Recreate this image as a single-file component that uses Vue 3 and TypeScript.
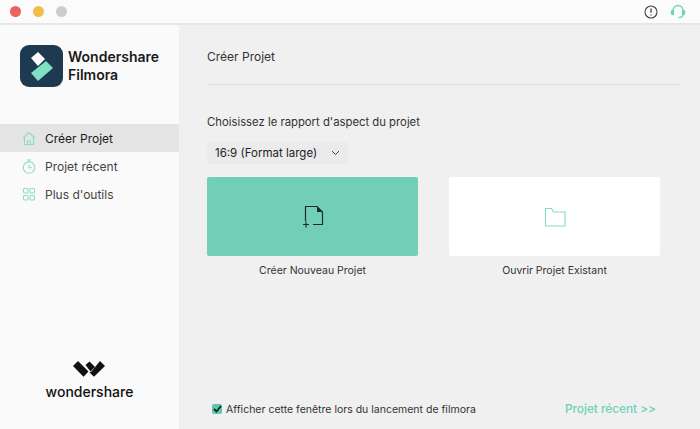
<script setup lang="ts">
interface NavItem { label: string; icon: string; active?: boolean }
const nav: NavItem[] = [
  { label: 'Créer Projet', icon: 'home', active: true },
  { label: 'Projet récent', icon: 'clock' },
  { label: "Plus d'outils", icon: 'grid' },
]
</script>

<template>
  <div class="window">
    <header class="titlebar">
      <div class="lights">
        <span class="light red"></span>
        <span class="light yellow"></span>
        <span class="light grey"></span>
      </div>
      <div class="tools">
        <svg width="14" height="14" viewBox="0 0 14 14" fill="none" stroke="#444" stroke-width="1.100">
          <circle cx="7" cy="7" r="6"/>
          <path d="M7 3.400v4.400M7 9.400v1.200" stroke-width="1.300"/>
        </svg>
        <svg width="16" height="15" viewBox="0 0 16 15" fill="none" stroke="#6fd3b9" stroke-width="1.300">
          <path d="M3 8V6.500a5 5 0 0 1 10 0V8"/>
          <rect x="1.500" y="6.500" width="2" height="4" rx="1" fill="#6fd3b9"/>
          <rect x="12.500" y="6.500" width="2" height="4" rx="1" fill="#6fd3b9"/>
          <path d="M13 10.500c0 2-2 3-4.500 3"/>
        </svg>
      </div>
    </header>
    <div class="body">
      <aside class="sidebar">
        <div class="brand">
          <div class="logo">
            <svg width="43" height="42" viewBox="0 0 43 42">
              <path d="M11 13 L18 7 L25 14 L18 21Z" fill="#fff"/>
              <path d="M11 28 L26 16 L33 23 L18 36Z" fill="#7fe0c4"/>
            </svg>
          </div>
          <div class="brand-name">Wondershare<br />Filmora</div>
        </div>
        <nav class="nav">
          <div v-for="item in nav" :key="item.label" class="nav-item" :class="{ active: item.active }">
            <svg width="14" height="15" viewBox="0 0 14 15" fill="none" stroke="#8fdcc6" stroke-width="1.100">
              <template v-if="item.icon === 'home'">
                <path d="M1 7 L7 1.500 L13 7"/>
                <path d="M2.500 6v7.500h9V6"/>
                <path d="M5.500 13.500V10h3v3.500"/>
              </template>
              <template v-else-if="item.icon === 'clock'">
                <circle cx="7" cy="8.500" r="5.700"/>
                <path d="M5 1h4M7 1v2M7 5.500v3.300h3"/>
              </template>
              <template v-else>
                <rect x="1.500" y="1.500" width="4.500" height="4.500" rx="1"/>
                <rect x="8" y="1.500" width="4.500" height="4.500" rx="1"/>
                <rect x="1.500" y="8.500" width="4.500" height="4.500" rx="1"/>
                <rect x="8" y="8.500" width="4.500" height="4.500" rx="1"/>
              </template>
            </svg>
            <span>{{ item.label }}</span>
          </div>
        </nav>
        <div class="ws">
          <svg width="33" height="17" viewBox="0 0 33 17" fill="#111">
            <path d="M0 5 L5 0 L15.500 10.500 L10.500 15.700Z"/>
            <path d="M12.500 4 L16.500 0.500 L22 6 L17.500 10.500Z"/>
            <path d="M18.500 10.500 L27 0 L32 5 L21 15.700 L16.500 11.500Z"/>
          </svg>
          <div class="ws-name">wondershare</div>
        </div>
      </aside>
      <main class="main">
        <h1 class="title">Créer Projet</h1>
        <div class="rule"></div>
        <p class="label">Choisissez le rapport d'aspect du projet</p>
        <div class="select">
          <span>16:9 (Format large)</span>
          <svg width="9" height="6" viewBox="0 0 9 6" fill="none" stroke="#444" stroke-width="1"><path d="M1 1 L4.500 4.500 L8 1"/></svg>
        </div>
        <div class="cards">
          <div class="card-col">
            <div class="card green">
              <svg width="22" height="24" viewBox="0 0 22 24" fill="none" stroke="#1c2b2a" stroke-width="1.200">
                <path d="M3.500 16V1.500H15L20.500 7v12.500H11"/>
                <path d="M15 1.500 L20.500 7 H15Z" fill="#1c2b2a" stroke="none"/>
                <path d="M1 19.500h6M4 16.500v6"/>
              </svg>
            </div>
            <div class="card-label">Créer Nouveau Projet</div>
          </div>
          <div class="card-col">
            <div class="card white">
              <svg width="22" height="20" viewBox="0 0 22 20" fill="none" stroke="#8bdac6" stroke-width="1.100">
                <path d="M1.500 1.500h6l2 3.500H21v14H1.500Z"/>
              </svg>
            </div>
            <div class="card-label">Ouvrir Projet Existant</div>
          </div>
        </div>
        <footer class="footer">
          <label class="check">
            <span class="box">
              <svg width="9" height="8" viewBox="0 0 9 8" fill="none" stroke="#10231f" stroke-width="1.800"><path d="M1 4 L3.500 6.500 L8 1"/></svg>
            </span>
            <span>Afficher cette fenêtre lors du lancement de filmora</span>
          </label>
          <span class="recent">Projet récent &gt;&gt;</span>
        </footer>
      </main>
    </div>
  </div>
</template>

<style>
body { margin: 0; }
</style>

<style scoped>
.window {
  width: 700px;
  height: 429px;
  display: flex;
  flex-direction: column;
  overflow: hidden;
  font-family: Inter, "Liberation Sans", sans-serif;
  color: #333;
}
.titlebar {
  height: 23px;
  flex: none;
  background: #fbfbfb;
  border-bottom: 2px solid #e6e6e6;
  display: flex;
  align-items: center;
  justify-content: space-between;
  padding: 0 14px 0 10px;
}
.lights { display: flex; gap: 12px; }
.light { width: 11px; height: 11px; border-radius: 50%; }
.red { background: #e9645d; }
.yellow { background: #f3bd4e; }
.grey { background: #cdcdcd; }
.tools { display: flex; align-items: center; gap: 12px; }
.body { flex: 1; display: flex; min-height: 0; }
.sidebar {
  width: 179px;
  flex: none;
  background: #fafafa;
  display: flex;
  flex-direction: column;
}
.brand {
  display: flex;
  align-items: center;
  gap: 5px;
  padding: 20px 0 0 20px;
}
.logo {
  width: 43px;
  height: 42px;
  border-radius: 9px;
  background: #1e3a50;
  display: flex;
}
.brand-name {
  font-size: 14px;
  line-height: 18px;
  font-weight: 600;
  color: #1a1a1a;
}
.nav { margin-top: 37px; }
.nav-item {
  height: 28px;
  display: flex;
  align-items: center;
  gap: 9px;
  padding-left: 22px;
  font-size: 12px;
  color: #444;
}
.nav-item.active { background: #e4e4e4; color: #1a1a1a; }
.ws {
  margin-top: auto;
  padding-bottom: 29px;
  display: flex;
  flex-direction: column;
  align-items: center;
  gap: 5px;
}
.ws-name { font-size: 14px; color: #111; line-height: 17px; font-weight: 500; }
.main {
  flex: 1;
  min-width: 0;
  background: #f0f0f0;
  padding: 24px 20px 0 28px;
  display: flex;
  flex-direction: column;
}
.title {
  margin: 0;
  font-size: 12px;
  line-height: 16px;
  font-weight: 400;
  color: #333;
}
.rule { height: 1px; background: #dcdcdc; margin-top: 19px; }
.label {
  margin: 29px 0 0;
  font-size: 11.300px;
  line-height: 16px;
  color: #333;
}
.select {
  margin-top: 12px;
  width: 141px;
  height: 22px;
  box-sizing: border-box;
  padding: 0 8px;
  background: #ebebeb;
  border-radius: 3px;
  display: flex;
  align-items: center;
  justify-content: space-between;
  font-size: 11.500px;
  color: #222;
}
.cards { display: flex; gap: 31px; margin-top: 13px; }
.card-col { width: 211px; }
.card {
  height: 79px;
  border-radius: 2px;
  display: flex;
  align-items: center;
  justify-content: center;
}
.green { background: #72cfb5; }
.white { background: #fff; }
.card-label {
  margin-top: 8px;
  text-align: center;
  font-size: 10.500px;
  line-height: 13px;
  color: #333;
}
.footer {
  margin-top: auto;
  padding: 0 24px 13px 5px;
  display: flex;
  align-items: center;
  justify-content: space-between;
}
.check {
  display: flex;
  align-items: center;
  gap: 4px;
  font-size: 10.500px;
  color: #333;
}
.box {
  width: 10px;
  height: 10px;
  background: #5fc5ab;
  border-radius: 2px;
  display: flex;
  align-items: center;
  justify-content: center;
}
.recent { font-size: 11.800px; color: #6fd0b8; font-weight: 500; }
</style>
